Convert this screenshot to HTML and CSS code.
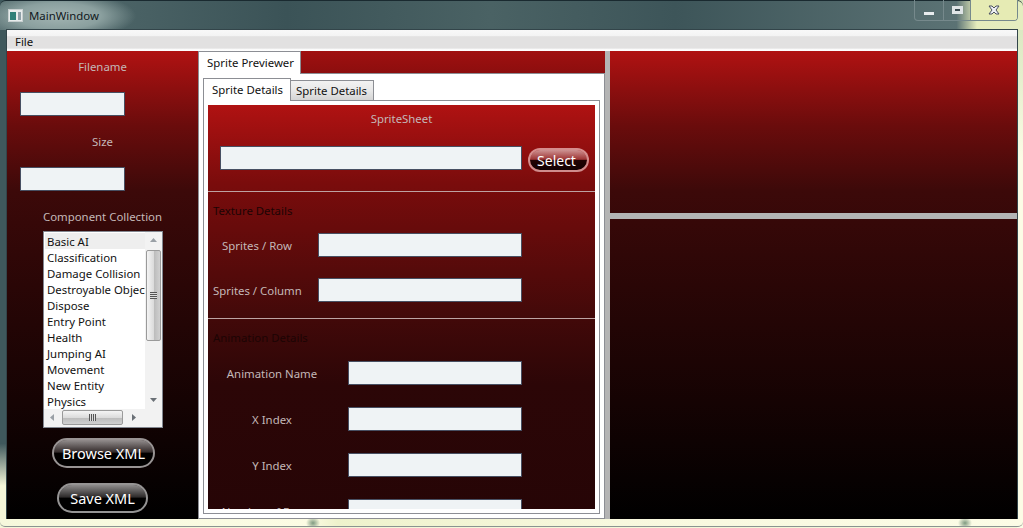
FILE: index.html
```html
<!DOCTYPE html>
<html>
<head>
	<meta charset="utf-8">
	<title>MainWindow</title>
	<link rel="stylesheet" href="styles.css">
</head>
<body>
<div class="window">
	<div class="titlebar">
		<svg class="app-icon" width="15" height="13" viewBox="0 0 15 13"><rect x="0.5" y="0.5" width="14" height="12" fill="#e8ecec" stroke="#c8d0d0"/><rect x="2" y="3" width="6" height="8" fill="#2e7f78"/><rect x="10" y="3" width="3" height="8" fill="#8fa0a8"/></svg>
		<span class="title-text">MainWindow</span>
		<div class="caption">
			<div class="cap-btn cap-min"><span class="min-glyph"></span></div>
			<div class="cap-btn cap-max"><span class="max-glyph"></span></div>
			<div class="cap-btn cap-close">
				<svg width="12" height="10" viewBox="0 0 12 10"><path d="M1 1h3l2 2 2-2h3L8 5l3 4H8L6 7 4 9H1l3-4z" fill="#eef0f4" stroke="#4a5060" stroke-width="1"/></svg>
			</div>
		</div>
	</div>
	<div class="client">
		<div class="menubar"><span class="menu-item">File</span></div>
		<div class="main">
			<div class="sidebar">
				<div class="lbl side-lbl first">Filename</div>
				<div class="field side-field"></div>
				<div class="lbl side-lbl size">Size</div>
				<div class="field side-field"></div>
				<div class="lbl side-lbl comp">Component Collection</div>
				<div class="listbox">
					<div class="list-top">
						<ul class="items">
							<li class="sel">Basic AI</li>
							<li>Classification</li>
							<li>Damage Collision</li>
							<li>Destroyable Object</li>
							<li>Dispose</li>
							<li>Entry Point</li>
							<li>Health</li>
							<li>Jumping AI</li>
							<li>Movement</li>
							<li>New Entity</li>
							<li>Physics</li>
						</ul>
						<div class="vscroll">
							<svg class="arrow" width="7" height="4" viewBox="0 0 7 4"><path d="M0 4L3.5 0 7 4z" fill="#9aa0a6"/></svg>
							<div class="vthumb"><span class="grip-h"></span></div>
							<svg class="arrow arrow-down" width="7" height="4" viewBox="0 0 7 4"><path d="M0 0L3.5 4 7 0z" fill="#6a7076"/></svg>
						</div>
					</div>
					<div class="hscroll">
						<svg width="4" height="7" viewBox="0 0 4 7"><path d="M4 0L0 3.5 4 7z" fill="#9aa0a6"/></svg>
						<div class="hthumb"><span class="grip-v"></span></div>
						<svg width="4" height="7" viewBox="0 0 4 7"><path d="M0 0L4 3.5 0 7z" fill="#6a7076"/></svg>
					</div>
				</div>
				<div class="pill pill-browse">Browse XML</div>
				<div class="pill pill-save">Save XML</div>
			</div>
			<div class="tabs-outer">
				<div class="tabstrip"><div class="tab tab-outer">Sprite Previewer</div></div>
				<div class="outer-panel">
					<div class="tabstrip inner-strip">
						<div class="tab tab-inner">Sprite Details</div>
						<div class="tab tab-off">Sprite Details</div>
					</div>
					<div class="inner-panel">
						<div class="clip">
							<div class="details">
								<div class="lbl sheet-lbl">SpriteSheet</div>
								<div class="sheet-row">
									<div class="field sheet-field"></div>
									<div class="pill pill-select">Select</div>
								</div>
								<div class="sep sep-one"></div>
								<div class="heading">Texture Details</div>
								<div class="row tex-row first-tex">
									<div class="lbl row-lbl">Sprites / Row</div>
									<div class="field"></div>
								</div>
								<div class="row tex-row">
									<div class="lbl row-lbl">Sprites / Column</div>
									<div class="field"></div>
								</div>
								<div class="sep sep-two"></div>
								<div class="heading">Animation Details</div>
								<div class="row anim-row first-anim">
									<div class="lbl row-lbl">Animation Name</div>
									<div class="field"></div>
								</div>
								<div class="row anim-row">
									<div class="lbl row-lbl">X Index</div>
									<div class="field"></div>
								</div>
								<div class="row anim-row">
									<div class="lbl row-lbl">Y Index</div>
									<div class="field"></div>
								</div>
								<div class="row anim-row">
									<div class="lbl row-lbl">Number of Frames</div>
									<div class="field"></div>
								</div>
							</div>
						</div>
					</div>
				</div>
			</div>
			<div class="vsplit"></div>
			<div class="right">
				<div class="pane-top"></div>
				<div class="hsplit"></div>
				<div class="pane-bottom"></div>
			</div>
		</div>
	</div>
	<div class="bottom-strip"></div>
</div>
</body>
</html>
```

FILE: styles.css
```css
html, body
{
	margin: 0;
	padding: 0;
	overflow: hidden;
}

body
{
	width: 1023px;
	height: 528px;
	font: 11.4px "Noto Sans", "Open Sans", sans-serif;
	color: #111;
}

.window
{
	width: 1023px;
	height: 528px;
	display: flex;
	flex-direction: column;
	background:
		linear-gradient(180deg, #3f585c 0, #3f585c 84%, #f4f6d8 92%) 0 0 / 7px 100% no-repeat,
		linear-gradient(180deg, #d6e4bc 0, #e4eecc 14%, #fcfce6 30%) 100% 0 / 6px 100% no-repeat,
		#f4f6d8;
}

/* title bar */
.titlebar
{
	height: 30px;
	flex: none;
	display: flex;
	align-items: center;
	padding: 0 5px 0 8px;
	box-sizing: border-box;
	border-top: 1px solid #1a2a30;
	border-radius: 6px 6px 0 0;
	background:
		radial-gradient(ellipse 78px 24px at 58px 15px, #a2b4b2 0, #8ba09f 55%, rgba(144,164,164,0) 100%),
		linear-gradient(90deg, #566e70 0, #3b5357 28%, #4a6264 48%, #3d5559 66%, #5b7274 93.5%, #e6edbc 95.5%, #e4edc0 100%);
}

.app-icon
{
	flex: none;
}

.title-text
{
	margin-left: 6px;
	color: #10181c;
}

.caption
{
	margin-left: auto;
	margin-top: -1px;
	align-self: flex-start;
	display: flex;
	height: 20px;
	border: 1px solid #76898c;
	border-top: none;
	border-radius: 0 0 4px 4px;
	overflow: hidden;
}

.cap-btn
{
	height: 20px;
	box-sizing: border-box;
	display: flex;
	align-items: center;
	justify-content: center;
	border-right: 1px solid #76898c;
}

.cap-min
{
	width: 29px;
}

.cap-max
{
	width: 27px;
}

.cap-close
{
	width: 46px;
	border-right: none;
	background: #e6ebb4;
}

.min-glyph
{
	width: 10px;
	height: 3px;
	margin-top: 7px;
	background: #e8ecee;
}

.max-glyph
{
	width: 5px;
	height: 2px;
	border: 3px solid #dfe4e6;
	background: #3a4a50;
}

/* client area */
.client
{
	height: 489px;
	flex: none;
	margin: 0 6px 0 7px;
	display: flex;
	flex-direction: column;
	outline: 1px solid #33454a;
}

.menubar
{
	height: 21px;
	flex: none;
	box-sizing: border-box;
	padding-left: 8px;
	line-height: 23px;
	background: linear-gradient(180deg, #f8f8f8 0, #f4f4f4 26%, #e2e1e1 32%, #e2e1e1 86%, #fbfbfb 92%, #fff 100%);
}

.main
{
	flex: 1;
	display: flex;
	min-height: 0;
}

/* shared */
.lbl
{
	color: #c4b8b8;
}

.field
{
	box-sizing: border-box;
	height: 24px;
	background: #eff3f5;
	border: 1px solid #474f62;
}

.pill
{
	box-sizing: border-box;
	display: flex;
	align-items: center;
	justify-content: center;
	color: #fff;
	border: 2px solid rgba(255, 255, 255, 0.58);
	border-radius: 16px;
	font-size: 14.5px;
	background-clip: padding-box;
	background-image: linear-gradient(180deg, rgba(255, 255, 255, 0.55) 0, rgba(255, 255, 255, 0.16) 47%, rgba(0, 0, 0, 0.75) 50%, rgba(0, 0, 0, 0.85) 100%);
}

/* left panel */
.sidebar
{
	width: 191px;
	flex: none;
	display: flex;
	flex-direction: column;
	box-sizing: border-box;
	padding-top: 8px;
	background: linear-gradient(180deg, #b01212 0, #6a0c0c 16%, #3c0909 30%, #2a0606 50%, #000 100%);
}

.side-lbl
{
	text-align: center;
	line-height: 16px;
}

.side-field
{
	width: 105px;
	margin: 17px 0 0 13px;
}

.size, .comp
{
	margin-top: 18px;
}

.listbox
{
	box-sizing: border-box;
	width: 120px;
	height: 197px;
	margin: 6px 0 0 36px;
	background: #fff;
	border: 1px solid #828790;
	display: flex;
	flex-direction: column;
}

.list-top
{
	flex: 1;
	display: flex;
	min-height: 0;
}

.items
{
	flex: 1;
	min-width: 0;
	margin: 0;
	padding: 1px 0 0 1px;
	list-style: none;
	overflow: hidden;
}

.items li
{
	height: 16px;
	line-height: 18px;
	padding-left: 2px;
	white-space: nowrap;
	overflow: hidden;
}

.items .sel
{
	background: #eeeeee;
}

.vscroll
{
	width: 17px;
	flex: none;
	background: #f2f2f2;
	display: flex;
	flex-direction: column;
	align-items: center;
	padding-top: 6px;
	box-sizing: border-box;
}

.arrow-down
{
	margin-top: auto;
	margin-bottom: 7px;
}

.vthumb
{
	box-sizing: border-box;
	width: 15px;
	height: 91px;
	margin-top: 8px;
	border: 1px solid #9a9a9a;
	border-radius: 2px;
	background: linear-gradient(90deg, #f4f4f4 0, #dcdcdc 50%, #bcbcbc 55%, #d0d0d0 100%);
	display: flex;
	align-items: center;
	justify-content: center;
}

.grip-h
{
	width: 7px;
	height: 7px;
	background: repeating-linear-gradient(180deg, #555 0, #555 1px, #ddd 1px, #ddd 2px);
}

.hscroll
{
	height: 18px;
	flex: none;
	box-sizing: border-box;
	background: #f2f2f2;
	display: flex;
	align-items: center;
	padding: 0 0 2px 6px;
}

.hthumb
{
	box-sizing: border-box;
	width: 61px;
	height: 15px;
	margin: 0 9px 0 8px;
	border: 1px solid #9a9a9a;
	border-radius: 2px;
	background: linear-gradient(180deg, #f4f4f4 0, #dcdcdc 50%, #bcbcbc 55%, #d0d0d0 100%);
	display: flex;
	align-items: center;
	justify-content: center;
}

.grip-v
{
	width: 7px;
	height: 7px;
	background: repeating-linear-gradient(90deg, #555 0, #555 1px, #ddd 1px, #ddd 2px);
}

.pill-browse
{
	width: 103px;
	height: 30px;
	margin: 10px 0 0 45px;
}

.pill-save
{
	width: 91px;
	height: 30px;
	margin: 15px 0 0 50px;
}

/* tabs */
.tabs-outer
{
	width: 407px;
	flex: none;
	display: flex;
	flex-direction: column;
	background: linear-gradient(180deg, #a01010 0, #8c0e0e 22px);
}

.tabstrip
{
	display: flex;
	align-items: flex-end;
	flex: none;
}

.tab
{
	box-sizing: border-box;
	border: 1px solid #8c8e94;
	border-bottom: none;
	line-height: 16px;
}

.tab-outer
{
	width: 103px;
	height: 23px;
	padding: 3px 0 0 8px;
	background: #fff;
	position: relative;
	z-index: 1;
	margin-bottom: -1px;
}

.tabs-outer > .tabstrip
{
	height: 22px;
}

.outer-panel
{
	flex: 1;
	min-height: 0;
	box-sizing: border-box;
	padding: 4px;
	background: #fff;
	border: 1px solid #8c8e94;
	display: flex;
	flex-direction: column;
}

.inner-strip
{
	height: 22px;
}

.tab-inner
{
	width: 88px;
	height: 23px;
	padding: 3px 0 0 8px;
	background: #fff;
	position: relative;
	z-index: 1;
	margin-bottom: -1px;
}

.tab-off
{
	width: 84px;
	height: 20px;
	padding: 2px 0 0 5px;
	margin-left: -1px;
	background: linear-gradient(180deg, #f2f2f2 0, #e8e8e8 50%, #d4d4d4 100%);
}

.inner-panel
{
	flex: 1;
	min-height: 0;
	box-sizing: border-box;
	padding: 4px;
	border: 1px solid #8c8e94;
	background: #fff;
	display: flex;
}

.clip
{
	flex: 1;
	overflow: hidden;
}

.details
{
	height: 560px;
	background: linear-gradient(180deg, #b01212 0, #7a0c0c 14%, #420909 38%, #2c0607 50%, #1f0405 100%);
}

.sheet-lbl
{
	text-align: center;
	padding-top: 6px;
	line-height: 16px;
}

.sheet-row
{
	display: flex;
	align-items: flex-start;
	margin: 19px 0 0 12px;
}

.sheet-field
{
	width: 302px;
}

.pill-select
{
	width: 61px;
	height: 24px;
	margin: 2px 0 0 6px;
	padding-right: 4px;
	font-size: 14px;
	border-color: rgba(255, 220, 220, 0.62);
}

.sep
{
	height: 1px;
	background: #bda3a3;
}

.sep-one
{
	margin-top: 19px;
}

.sep-two
{
	margin-top: 16px;
}

.heading
{
	color: #1c0404;
	padding: 11px 0 0 5px;
	line-height: 16px;
}

.row
{
	display: flex;
	align-items: center;
	height: 24px;
}

.row-lbl
{
	text-align: center;
	white-space: nowrap;
	flex: none;
}

.tex-row
{
	margin-top: 21px;
	padding-left: 5px;
}

.first-tex
{
	margin-top: 14px;
}

.tex-row .row-lbl
{
	width: 88px;
}

.tex-row .field
{
	width: 204px;
	margin-left: 17px;
}

.anim-row
{
	margin-top: 22px;
	padding-left: 5px;
}

.first-anim
{
	margin-top: 15px;
}

.anim-row .row-lbl
{
	width: 118px;
}

.anim-row .field
{
	width: 174px;
	margin-left: 17px;
}

/* right side */
.vsplit
{
	width: 5px;
	flex: none;
	background: #b4b4b4;
}

.right
{
	flex: 1;
	display: flex;
	flex-direction: column;
	background: linear-gradient(180deg, #b01212 0, #6a0c0c 16%, #3c0909 30%, #2a0606 50%, #000 100%);
}

.pane-top
{
	height: 162px;
	flex: none;
}

.hsplit
{
	height: 6px;
	flex: none;
	background: #b4b4b4;
}

.pane-bottom
{
	flex: 1;
}

.bottom-strip
{
	flex: 1;
	margin-bottom: 1px;
	border-bottom: 1px solid #8a9490;
	border-radius: 0 0 5px 5px;
	background:
		radial-gradient(ellipse 7px 6px at 313px 4px, #7f9a80 0, rgba(127, 154, 128, 0) 100%),
		radial-gradient(ellipse 7px 6px at 965px 4px, #7f9a80 0, rgba(127, 154, 128, 0) 100%),
		linear-gradient(90deg, #f6f8dc 0, #fcfce4 30%, #eef2cc 33%, #f8f8de 60%, #fcfce6 100%);
}
```
